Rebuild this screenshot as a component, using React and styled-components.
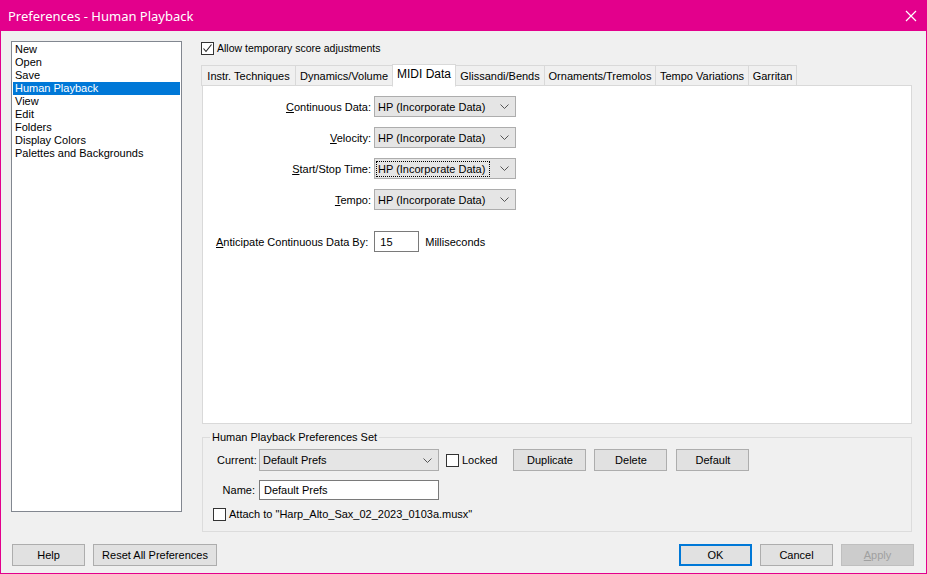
import React from "react";
import styled, { createGlobalStyle } from "styled-components";

const Global = createGlobalStyle`
  html, body { margin: 0; padding: 0; background: #f0f0f0; }
  body { font-family: "Liberation Sans", Arial, sans-serif; font-size: 11px; color: #000; }
  * { box-sizing: border-box; }
`;

const Window = styled.div`
  width: 927px;
  height: 574px;
  display: flex;
  flex-direction: column;
  background: #f0f0f0;
  border: 1px solid #e3008c;
  border-top: none;
  overflow: hidden;
`;

const TitleBar = styled.div`
  height: 31px;
  flex: none;
  background: #e3008c;
  color: #fff;
  display: flex;
  align-items: center;
  justify-content: space-between;
  padding: 0 10px 0 8px;
  margin: 0 -1px;
  font-family: "Noto Sans", "Open Sans", sans-serif;
  font-size: 13px;
`;

const Close = styled.svg`
  width: 12px;
  height: 12px;
`;

const Body = styled.div`
  flex: 1;
  display: flex;
  flex-direction: column;
  padding: 10px 12px 0 10px;
`;

const Main = styled.div`
  display: flex;
  align-items: flex-start;
  gap: 19px;
`;

const ListBox = styled.ul`
  list-style: none;
  margin: 0;
  padding: 1px 1px;
  width: 171px;
  height: 471px;
  background: #fff;
  border: 1px solid #828790;
`;

const ListItem = styled.li`
  height: 13px;
  line-height: 13px;
  padding-left: 2px;
  background: ${(p) => (p.$sel ? "#0078d7" : "transparent")};
  color: ${(p) => (p.$sel ? "#fff" : "#000")};
  white-space: nowrap;
`;

const Right = styled.div`
  width: 711px;
  display: flex;
  flex-direction: column;
`;

const CheckRow = styled.label`
  display: flex;
  align-items: center;
  gap: 3px;
  height: 14px;
  margin-left: ${(p) => p.$ml || 0}px;
  font-size: ${(p) => p.$fs || 11}px;
`;

const Box = styled.span`
  width: 13px;
  height: 13px;
  border: 1px solid #333;
  background: #fff;
  display: inline-flex;
  align-items: center;
  justify-content: center;
  flex: none;
`;

const TabStrip = styled.div`
  display: flex;
  align-items: flex-end;
  height: 31px;
  margin-left: 1px;
  position: relative;
  z-index: 1;
`;

const Tab = styled.div`
  height: ${(p) => (p.$active ? 23 : 21)}px;
  padding: 0 6px;
  display: flex;
  align-items: center;
  justify-content: center;
  background: ${(p) => (p.$active ? "#fff" : "#f0f0f0")};
  border: 1px solid #d9d9d9;
  border-bottom: ${(p) => (p.$active ? "1px solid #fff" : "1px solid #d9d9d9")};
  margin-left: -1px;
  margin-bottom: ${(p) => (p.$active ? -1 : 0)}px;
  white-space: nowrap;
  font-size: ${(p) => (p.$active ? "12px" : "11px")};
  padding-bottom: ${(p) => (p.$active ? 3 : 0)}px;
  width: ${(p) => p.$w}px;
`;

const Panel = styled.div`
  height: 339px;
  margin-left: 1px;
  background: #fff;
  border: 1px solid #d9d9d9;
  margin-top: -1px;
  padding: 10px 0 0 0;
  display: flex;
  flex-direction: column;
`;

const FormGrid = styled.div`
  display: grid;
  grid-template-columns: 168px 142px;
  column-gap: 3px;
  row-gap: 10px;
  align-items: center;
`;

const Label = styled.span`
  text-align: right;
  white-space: nowrap;
`;

const U = styled.span`
  text-decoration: underline;
`;

const Select = styled.div`
  height: ${(p) => p.$h || 21}px;
  width: ${(p) => p.$w || 142}px;
  border: 1px solid #adadad;
  background: #e5e5e5;
  display: flex;
  align-items: center;
  justify-content: space-between;
  padding: 0 6px 0 3px;
`;

const SelText = styled.span`
  ${(p) =>
    p.$focus &&
    `outline: 1px dotted #000; outline-offset: 1px; padding-right: 3px;`}
  white-space: nowrap;
`;

const Chevron = () => (
  <svg width="9" height="5" viewBox="0 0 9 5">
    <path d="M0.5 0.5 L4.5 4.5 L8.5 0.5" fill="none" stroke="#555" strokeWidth="1" />
  </svg>
);

const AnticipateRow = styled.div`
  display: flex;
  align-items: center;
  margin-top: 21px;
  margin-left: 13px;
`;

const Input = styled.div`
  width: ${(p) => p.$w}px;
  height: ${(p) => p.$h || 20}px;
  border: 1px solid #7a7a7a;
  background: #fff;
  display: flex;
  align-items: center;
  padding-left: ${(p) => p.$pl || 4}px;
  margin-left: ${(p) => p.$ml || 0}px;
  white-space: nowrap;
`;

const Unit = styled.span`
  margin-left: 6px;
`;

const Group = styled.fieldset`
  margin: 7px 0 0 1px;
  height: 101px;
  border: 1px solid #dcdcdc;
  padding: 6px 0 0 10px;
  min-width: 0;
`;

const Legend = styled.legend`
  padding: 0 2px;
  margin-left: -3px;
  font-size: 11px;
`;

const GroupRow = styled.div`
  display: flex;
  align-items: center;
  margin-top: ${(p) => p.$mt || 0}px;
  margin-left: ${(p) => p.$ml || 0}px;
`;

const GLabel = styled.span`
  width: ${(p) => p.$w}px;
  text-align: right;
  padding-right: 4px;
  white-space: nowrap;
`;

const Button = styled.div`
  width: ${(p) => p.$w || 73}px;
  height: 22px;
  display: flex;
  align-items: center;
  justify-content: center;
  background: #e1e1e1;
  border: ${(p) => (p.$default ? "2px solid #0078d7" : "1px solid #adadad")};
  color: ${(p) => (p.$disabled ? "#a0a0a0" : "#000")};
  ${(p) => p.$disabled && "background: #cccccc; border-color: #bfbfbf;"}
  white-space: nowrap;
  margin-left: ${(p) => p.$ml || 0}px;
  flex: none;
`;

const Footer = styled.div`
  display: flex;
  align-items: center;
  margin-top: 12px;
  padding-left: 1px;
`;

const Spacer = styled.div`
  flex: 1;
`;

const Check = () => (
  <svg width="11" height="11" viewBox="0 0 11 11">
    <path d="M1.5 5.5 L4 8.5 L9.5 1.5" fill="none" stroke="#222" strokeWidth="1.1" />
  </svg>
);

const items = [
  "New",
  "Open",
  "Save",
  "Human Playback",
  "View",
  "Edit",
  "Folders",
  "Display Colors",
  "Palettes and Backgrounds",
];

const tabs = [
  ["Instr. Techniques", 95],
  ["Dynamics/Volume", 98],
  ["MIDI Data", 64],
  ["Glissandi/Bends", 90],
  ["Ornaments/Tremolos", 112],
  ["Tempo Variations", 94],
  ["Garritan", 49],
];

const fields = [
  ["C", "ontinuous Data:"],
  ["V", "elocity:"],
  ["S", "tart/Stop Time:"],
  ["T", "empo:"],
];

export default function App() {
  return (
    <>
      <Global />
      <Window>
        <TitleBar>
          <span>Preferences - Human Playback</span>
          <Close viewBox="0 0 12 12">
            <path d="M1 1 L11 11 M11 1 L1 11" stroke="#fff" strokeWidth="1.2" />
          </Close>
        </TitleBar>
        <Body>
          <Main>
            <ListBox>
              {items.map((it) => (
                <ListItem key={it} $sel={it === "Human Playback"}>
                  {it}
                </ListItem>
              ))}
            </ListBox>
            <Right>
              <CheckRow $fs={10.5}>
                <Box>
                  <Check />
                </Box>
                Allow temporary score adjustments
              </CheckRow>
              <TabStrip>
                {tabs.map(([t, w]) => (
                  <Tab key={t} $w={w} $active={t === "MIDI Data"}>
                    {t}
                  </Tab>
                ))}
              </TabStrip>
              <Panel>
                <FormGrid>
                  {fields.map(([u, rest], i) => (
                    <React.Fragment key={rest}>
                      <Label>
                        <U>{u}</U>
                        {rest}
                      </Label>
                      <Select>
                        <SelText $focus={i === 2}>HP (Incorporate Data)</SelText>
                        <Chevron />
                      </Select>
                    </React.Fragment>
                  ))}
                </FormGrid>
                <AnticipateRow>
                  <Label>
                    <U>A</U>nticipate Continuous Data By:
                  </Label>
                  <Input $w={45} $h={21} $ml={6} $pl={5}>
                    15
                  </Input>
                  <Unit>Milliseconds</Unit>
                </AnticipateRow>
              </Panel>
              <Group>
                <Legend>Human Playback Preferences Set</Legend>
                <GroupRow $ml={4}>
                  <GLabel $w={42}>Current:</GLabel>
                  <Select $w={180} $h={22}>
                    <SelText>Default Prefs</SelText>
                    <Chevron />
                  </Select>
                  <CheckRow $ml={7}>
                    <Box />
                    Locked
                  </CheckRow>
                  <Button $ml={16}>Duplicate</Button>
                  <Button $ml={8}>Delete</Button>
                  <Button $ml={9}>Default</Button>
                </GroupRow>
                <GroupRow $mt={9} $ml={4}>
                  <GLabel $w={42}>Name:</GLabel>
                  <Input $w={180} $h={20}>
                    Default Prefs
                  </Input>
                </GroupRow>
                <GroupRow $mt={7}>
                  <CheckRow>
                    <Box />
                    Attach to "Harp_Alto_Sax_02_2023_0103a.musx"
                  </CheckRow>
                </GroupRow>
              </Group>
            </Right>
          </Main>
          <Footer>
            <Button>Help</Button>
            <Button $w={124} $ml={8}>
              Reset All Preferences
            </Button>
            <Spacer />
            <Button $default>OK</Button>
            <Button $ml={8}>Cancel</Button>
            <Button $ml={8} $disabled>
              <U>A</U>pply
            </Button>
          </Footer>
        </Body>
      </Window>
    </>
  );
}
